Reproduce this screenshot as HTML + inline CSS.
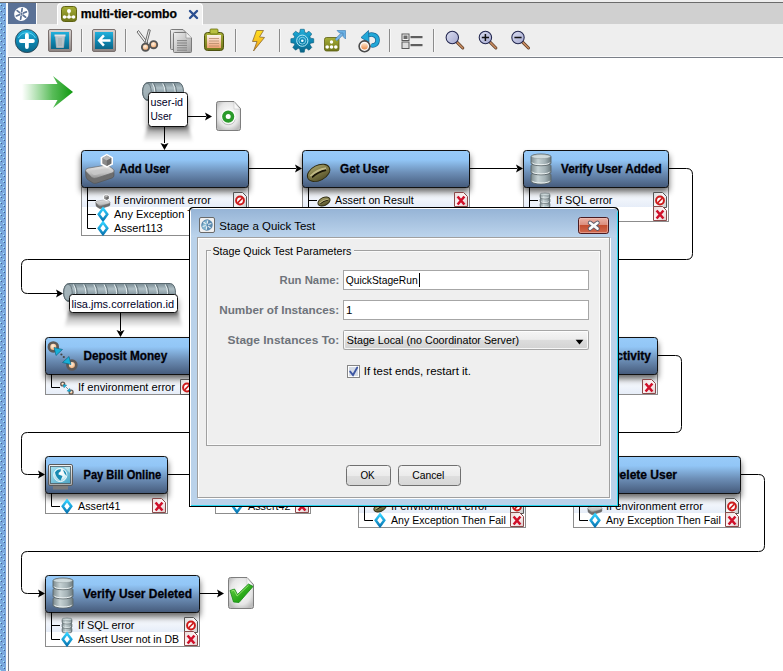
<!DOCTYPE html>
<html><head><meta charset="utf-8">
<style>
html,body{margin:0;padding:0;width:783px;height:671px;overflow:hidden;background:#fff;font-family:"Liberation Sans",sans-serif}
svg{display:block;position:absolute;left:0;top:0}
text{font-family:"Liberation Sans",sans-serif}
</style></head><body>
<svg width="783" height="671" viewBox="0 0 783 671">
<defs>
  <pattern id="dots" x="0" y="0" width="6" height="6" patternUnits="userSpaceOnUse">
    <rect width="6" height="6" fill="#7aa8de"/>
    <rect x="0" y="4" width="1" height="1" fill="#a8f4ff"/>
    <rect x="1" y="5" width="1" height="1" fill="#3e5f86"/>
    <rect x="3" y="1" width="1" height="1" fill="#a8f4ff"/>
    <rect x="4" y="2" width="1" height="1" fill="#3e5f86"/>
  </pattern>
  <linearGradient id="hdr" x1="0" y1="0" x2="0" y2="1">
    <stop offset="0" stop-color="#98cbf9"/>
    <stop offset="0.25" stop-color="#92c6f6"/>
    <stop offset="0.6" stop-color="#6c8eb6"/>
    <stop offset="1" stop-color="#455a7a"/>
  </linearGradient>
  <linearGradient id="row1" x1="0" y1="0" x2="0" y2="1">
    <stop offset="0" stop-color="#ffffff"/>
    <stop offset="1" stop-color="#e6edf8"/>
  </linearGradient>
  <linearGradient id="garrow" x1="0" y1="0" x2="1" y2="0">
    <stop offset="0" stop-color="#30b030" stop-opacity="0"/>
    <stop offset="0.6" stop-color="#22a622" stop-opacity="0.75"/>
    <stop offset="1" stop-color="#0e980e" stop-opacity="1"/>
  </linearGradient>
  <linearGradient id="qcyl" x1="0" y1="0" x2="0" y2="1">
    <stop offset="0" stop-color="#7a8c94"/>
    <stop offset="0.3" stop-color="#aebec4"/>
    <stop offset="0.6" stop-color="#8a9ca4"/>
    <stop offset="1" stop-color="#6a7a82"/>
  </linearGradient>
  <linearGradient id="labsh" x1="0" y1="0" x2="0" y2="1">
    <stop offset="0" stop-color="#000" stop-opacity="0.6"/>
    <stop offset="0.3" stop-color="#000" stop-opacity="0.3"/>
    <stop offset="1" stop-color="#000" stop-opacity="0"/>
  </linearGradient>
  <filter id="nshadow" x="-30%" y="-50%" width="160%" height="200%">
    <feGaussianBlur stdDeviation="3"/>
  </filter>
  <filter id="lshadow" x="-50%" y="-80%" width="200%" height="260%">
    <feGaussianBlur stdDeviation="3.6"/>
  </filter>
  <filter id="blur1" x="-30%" y="-50%" width="160%" height="200%">
    <feGaussianBlur stdDeviation="1.5"/>
  </filter>
  <filter id="blur2" x="-30%" y="-50%" width="160%" height="200%">
    <feGaussianBlur stdDeviation="3"/>
  </filter>

<linearGradient id="tealv" x1="0" y1="0" x2="0" y2="1">
  <stop offset="0" stop-color="#22b0dc"/><stop offset="0.5" stop-color="#0e88b4"/><stop offset="1" stop-color="#0a6688"/>
</linearGradient>
<linearGradient id="bevel" x1="0" y1="0" x2="0" y2="1">
  <stop offset="0" stop-color="#d8d2d0"/><stop offset="1" stop-color="#8a8280"/>
</linearGradient>
<linearGradient id="peach" x1="0" y1="0" x2="0" y2="1">
  <stop offset="0" stop-color="#ffe6cc"/><stop offset="1" stop-color="#e88a48"/>
</linearGradient>
<radialGradient id="peachr" cx="0.45" cy="0.4" r="0.6">
  <stop offset="0" stop-color="#fff4e8"/><stop offset="0.6" stop-color="#f6c090"/><stop offset="1" stop-color="#e89050"/>
</radialGradient>
<radialGradient id="globe" cx="0.55" cy="0.35" r="0.7">
  <stop offset="0" stop-color="#ffffff"/><stop offset="0.6" stop-color="#d8f0f6"/><stop offset="1" stop-color="#7ac4dc"/>
</radialGradient>
<linearGradient id="copyg" x1="0" y1="0" x2="1" y2="1">
  <stop offset="0" stop-color="#f0f0f0"/><stop offset="1" stop-color="#a0a0a0"/>
</linearGradient>
<linearGradient id="paper" x1="0" y1="0" x2="0" y2="1">
  <stop offset="0" stop-color="#fbf4ee"/><stop offset="1" stop-color="#f0a070"/>
</linearGradient>
<linearGradient id="sdoc" x1="0" y1="0" x2="1" y2="1">
  <stop offset="0" stop-color="#d8d8d8"/><stop offset="0.5" stop-color="#f8f8f8"/><stop offset="1" stop-color="#c8c8c8"/>
</linearGradient>
<linearGradient id="sdocr" x1="0" y1="0" x2="1" y2="1">
  <stop offset="0" stop-color="#e8d8d8"/><stop offset="0.5" stop-color="#fcf6f6"/><stop offset="1" stop-color="#dcc8c8"/>
</linearGradient>
<linearGradient id="grayv" x1="0" y1="0" x2="0" y2="1">
  <stop offset="0" stop-color="#f4f4f4"/><stop offset="1" stop-color="#a8a8a8"/>
</linearGradient>
<linearGradient id="olive" x1="0" y1="0" x2="0" y2="1">
  <stop offset="0" stop-color="#a8b038"/><stop offset="1" stop-color="#6e7418"/>
</linearGradient>
<linearGradient id="bolt" x1="0" y1="0" x2="0" y2="1">
  <stop offset="0" stop-color="#ffe020"/><stop offset="0.55" stop-color="#f8c020"/><stop offset="1" stop-color="#e88a10"/>
</linearGradient>
<linearGradient id="lens" x1="0" y1="0" x2="1" y2="1">
  <stop offset="0" stop-color="#dcdff0"/><stop offset="1" stop-color="#a4a8d0"/>
</linearGradient>
<linearGradient id="tray" x1="0" y1="0" x2="0" y2="1">
  <stop offset="0" stop-color="#e8e8e8"/><stop offset="0.6" stop-color="#c0c0c0"/><stop offset="1" stop-color="#909090"/>
</linearGradient>
<linearGradient id="beanf" x1="0" y1="0" x2="0" y2="1">
  <stop offset="0" stop-color="#a09a60"/><stop offset="1" stop-color="#56522a"/>
</linearGradient>
<linearGradient id="dbf" x1="0" y1="0" x2="1" y2="0">
  <stop offset="0" stop-color="#7c8a8e"/><stop offset="0.35" stop-color="#c6d2d4"/><stop offset="0.7" stop-color="#a4b2b6"/><stop offset="1" stop-color="#6c7a7e"/>
</linearGradient>
<linearGradient id="cyanv" x1="0" y1="0" x2="0" y2="1">
  <stop offset="0" stop-color="#30d0ff"/><stop offset="1" stop-color="#0a78b4"/>
</linearGradient>
<radialGradient id="docf" cx="0.5" cy="0.45" r="0.6">
  <stop offset="0" stop-color="#ffffff"/><stop offset="0.7" stop-color="#e6e6e6"/><stop offset="1" stop-color="#bdbdbd"/>
</radialGradient>
<linearGradient id="checkg" x1="0" y1="0" x2="1" y2="1">
  <stop offset="0" stop-color="#6ad04a"/><stop offset="0.6" stop-color="#28a818"/><stop offset="1" stop-color="#0a8a0a"/>
</linearGradient>
<linearGradient id="screen" x1="0" y1="0" x2="1" y2="1">
  <stop offset="0" stop-color="#a8e4f4"/><stop offset="1" stop-color="#4aa4c4"/>
</linearGradient>
</defs>

<rect x="0" y="0" width="783" height="671" fill="#ffffff"/>
<rect x="0" y="0" width="783" height="2" fill="#eeeeee"/>
<rect x="0" y="2" width="783" height="1" fill="#6b6b6b"/>
<rect x="0" y="3" width="783" height="21" fill="#d0d0d0"/>
<rect x="0" y="24" width="783" height="33" fill="#eeeeee"/>
<rect x="8" y="3" width="28" height="21" fill="#5a7196"/>
<rect x="36" y="3" width="1" height="21" fill="#ffffff"/>
<path d="M57,25 V7 Q57,3 61,3 H199 Q203,3 203,7 V25 Z" fill="#ffffff"/>
<path d="M58,25 V7.5 Q58,4 61.5,4 H198.5 Q202,4 202,7.5 V25 Z" fill="#f0f0f0"/>
<rect x="8" y="56" width="775" height="1" fill="#fafafa"/>
<rect x="8" y="57" width="775" height="614" fill="#7a7f88"/>
<rect x="9" y="58" width="774" height="613" fill="#ffffff"/>
<ellipse cx="21.4" cy="13.9" rx="7.4" ry="6.9" transform="rotate(-25 21.4 13.9)" fill="#fff"/><path d="M21.71,11.72 L22.15,8.55" stroke="#5d7396" stroke-width="1.7" stroke-linecap="round"/><path d="M23.44,13.08 L26.41,11.88" stroke="#5d7396" stroke-width="1.7" stroke-linecap="round"/><path d="M23.13,15.25 L25.66,17.22" stroke="#5d7396" stroke-width="1.7" stroke-linecap="round"/><path d="M21.09,16.08 L20.65,19.25" stroke="#5d7396" stroke-width="1.7" stroke-linecap="round"/><path d="M19.36,14.72 L16.39,15.92" stroke="#5d7396" stroke-width="1.7" stroke-linecap="round"/><path d="M19.67,12.55 L17.14,10.58" stroke="#5d7396" stroke-width="1.7" stroke-linecap="round"/><circle cx="21.4" cy="13.9" r="1.1" fill="#5d7396"/><rect x="61.5" y="6.5" width="15" height="15" rx="3" fill="url(#olive)" stroke="#5e6212"/><path d="M69,11 V17 M64.5,17 H73.5" stroke="#fff" stroke-width="1"/><circle cx="69" cy="11" r="2" fill="#fff"/><circle cx="64.5" cy="17" r="1.8" fill="#fff"/><circle cx="69" cy="17" r="1.8" fill="#fff"/><circle cx="73.5" cy="17" r="1.8" fill="#fff"/>
<text x="80.7" y="18.2" font-size="12.2" font-weight="bold" fill="#000" stroke="#000" stroke-width="0.25" textLength="96.3" lengthAdjust="spacingAndGlyphs">multi-tier-combo</text>
<path d="M190,11 L197,18 M197,11 L190,18" stroke="#2b4f91" stroke-width="2.4" stroke-linecap="round"/>

<circle cx="26.9" cy="41" r="11.6" fill="url(#tealv)" stroke="#2e4452" stroke-width="0.9"/><path d="M18.4,38 A9.5,9.5 0 0 1 35.4,38" fill="none" stroke="#6ae0fa" stroke-width="1" opacity="0.8"/><path d="M20.9,41 H32.9 M26.9,35 V47" stroke="#fff" stroke-width="3.8" stroke-linecap="round"/>
<rect x="48.5" y="29.5" width="23" height="22" rx="1.5" fill="url(#bevel)" stroke="#7a706e" stroke-width="1"/><rect x="51" y="32" width="18" height="17" fill="url(#tealv)"/><path d="M55.5,36.5 H64.5 L63.5,47.5 H56.5 Z" fill="#d4d0d0" fill-opacity="0.85" stroke="#c8b8b8" stroke-width="0.7"/><rect x="54.5" y="34.5" width="11" height="2" fill="#e8e0e0"/><path d="M59,38 V46 M61,38 V46" stroke="#a8a8a8" stroke-width="0.9"/>
<rect x="81" y="29" width="1" height="23" fill="#8c8c8c"/><rect x="82" y="29" width="1" height="23" fill="#f8f8f8"/>
<rect x="92.5" y="29.5" width="23" height="22" rx="1.5" fill="url(#bevel)" stroke="#7a706e" stroke-width="1"/><rect x="95" y="32" width="18" height="17" fill="url(#tealv)"/><path d="M97.5,40.5 L103,34.5 L104.8,36.3 L102,39.2 H110.5 V41.8 H102 L104.8,44.7 L103,46.5 Z" fill="#fff"/>
<rect x="125" y="29" width="1" height="23" fill="#8c8c8c"/><rect x="126" y="29" width="1" height="23" fill="#f8f8f8"/>
<path d="M137,32 L138.5,30.5 L148,43 L146.5,44.5 Z" fill="#f4f4f4" stroke="#5a5a5a" stroke-width="0.9" stroke-linejoin="round"/><path d="M148.5,29.5 L150.3,30.2 L146.5,44.5 L144.8,43.8 Z" fill="#f4f4f4" stroke="#5a5a5a" stroke-width="0.9" stroke-linejoin="round"/><circle cx="146.2" cy="43.6" r="0.9" fill="#5a5a5a"/><circle cx="145.5" cy="47.2" r="3.6" fill="url(#peachr)" stroke="#555" stroke-width="1.9"/><circle cx="153.6" cy="44.7" r="3.6" fill="url(#peachr)" stroke="#555" stroke-width="1.9"/>
<path d="M170.5,30.5 Q170.5,29.5 171.5,29.5 H183 L188.5,35 V48.5 Q188.5,49.5 187.5,49.5 H171.5 Q170.5,49.5 170.5,48.5 Z" fill="url(#copyg)" stroke="#7a7a7a"/><path d="M173.5,33.5 Q173.5,32.5 174.5,32.5 H186 L191.5,38 V51.5 Q191.5,52.5 190.5,52.5 H174.5 Q173.5,52.5 173.5,51.5 Z" fill="url(#copyg)" stroke="#7a7a7a"/><path d="M186,32.5 V38 H191.5" fill="#f0f0f0" stroke="#9a9a9a" stroke-width="0.7"/><rect x="177" y="40.0" width="10" height="1.2" fill="#8a8a8a"/><rect x="177" y="42.4" width="10" height="1.2" fill="#8a8a8a"/><rect x="177" y="44.8" width="10" height="1.2" fill="#8a8a8a"/><rect x="177" y="47.2" width="10" height="1.2" fill="#8a8a8a"/><rect x="177" y="49.6" width="10" height="1.2" fill="#8a8a8a"/>
<rect x="204.5" y="32.5" width="19" height="18" rx="3" fill="url(#olive)" stroke="#4e5210"/><rect x="210" y="29" width="8" height="5" rx="1" fill="#b8c040" stroke="#6a7010" stroke-width="0.8"/><rect x="207" y="35" width="14" height="13" fill="url(#paper)"/><path d="M209,38.5 H219 M209,41 H219 M209,43.5 H219 M209,46 H219" stroke="#b88a6a" stroke-width="0.8"/>
<rect x="235" y="29" width="1" height="23" fill="#8c8c8c"/><rect x="236" y="29" width="1" height="23" fill="#f8f8f8"/>
<path d="M256.5,30.5 H263.5 L259.5,37 L264.5,37.5 L253.5,51 L257,41.5 H252.5 Z" fill="url(#bolt)" stroke="#8a6a30" stroke-width="0.8" stroke-linejoin="round"/>
<rect x="279" y="29" width="1" height="23" fill="#8c8c8c"/><rect x="280" y="29" width="1" height="23" fill="#f8f8f8"/>
<polygon points="299.76,32.48 300.34,29.27 304.26,29.27 304.84,32.48 306.31,33.09 309.00,31.23 311.77,34.00 309.91,36.69 310.52,38.16 313.73,38.74 313.73,42.66 310.52,43.24 309.91,44.71 311.77,47.40 309.00,50.17 306.31,48.31 304.84,48.92 304.26,52.13 300.34,52.13 299.76,48.92 298.29,48.31 295.60,50.17 292.83,47.40 294.69,44.71 294.08,43.24 290.87,42.66 290.87,38.74 294.08,38.16 294.69,36.69 292.83,34.00 295.60,31.23 298.29,33.09" fill="url(#tealv)" stroke="#0a5a7a" stroke-width="0.6" stroke-linejoin="round"/><circle cx="302.3" cy="40.7" r="5.6" fill="none" stroke="#b8ecfa" stroke-width="1"/><circle cx="302.3" cy="40.7" r="3.4" fill="none" stroke="#9ee0f4" stroke-width="0.8"/><circle cx="302.3" cy="40.7" r="1.3" fill="#f4fcff"/>
<rect x="324.5" y="37.5" width="14.5" height="13.5" rx="2" fill="url(#olive)" stroke="#5a5e10" stroke-width="0.8"/><circle cx="331.5" cy="42" r="1.7" fill="#fff"/><circle cx="327.2" cy="47" r="1.8" fill="#fff"/><circle cx="331.5" cy="47" r="1.8" fill="#fff"/><circle cx="335.8" cy="47" r="1.8" fill="#fff"/><path d="M336,40 L343.5,32.5" stroke="#3a7ab0" stroke-width="3"/><path d="M336,40 L343.5,32.5" stroke="#7ab8e8" stroke-width="1.8"/><path d="M337,30.5 H345.5 V39 L343,36.5 V33 H339.5 Z" fill="#6ab0e4" stroke="#3a78b0" stroke-width="0.6"/>
<path d="M365,37 C370,33 377,34 377.5,39.5 C378,44 374,46.5 371,45" fill="none" stroke="#1a6a9a" stroke-width="4.6"/><path d="M365,37 C370,33 377,34 377.5,39.5 C378,44 374,46.5 371,45" fill="none" stroke="#22a8d8" stroke-width="3"/><path d="M361,37.5 L368.5,30.5 L369,42.5 Z" fill="#22a8d8" stroke="#1a6a9a" stroke-width="0.8" stroke-linejoin="round"/><circle cx="364.5" cy="46.3" r="5.4" fill="#fafafa" stroke="#4a4a4a" stroke-width="1.6"/><circle cx="364.5" cy="46.3" r="3.3" fill="url(#peach)"/>
<rect x="389" y="29" width="1" height="23" fill="#8c8c8c"/><rect x="390" y="29" width="1" height="23" fill="#f8f8f8"/>
<rect x="402.0" y="34.0" width="7" height="6.5" fill="#f4f4f4" stroke="#5a5a5a"/><rect x="403.5" y="35.5" width="4" height="3.5" fill="#6a6a6a"/><rect x="402.0" y="42.0" width="7" height="6.5" fill="#dcdcdc" stroke="#5a5a5a"/><rect x="410.5" y="36.0" width="12" height="2.2" fill="#5e5e5e"/><rect x="410.5" y="44.0" width="12" height="2.2" fill="#5e5e5e"/>
<rect x="433" y="29" width="1" height="23" fill="#8c8c8c"/><rect x="434" y="29" width="1" height="23" fill="#f8f8f8"/>
<path d="M456.90000000000003,42.1 L462.8,48.0" stroke="#5a3a22" stroke-width="3" stroke-linecap="round"/><path d="M456.90000000000003,42.1 L462.8,48.0" stroke="#c88c62" stroke-width="1.6" stroke-linecap="round"/><circle cx="452.3" cy="37.5" r="6.2" fill="url(#lens)" stroke="#22264e" stroke-width="1.05"/>
<path d="M490.0,42.1 L495.9,48.0" stroke="#5a3a22" stroke-width="3" stroke-linecap="round"/><path d="M490.0,42.1 L495.9,48.0" stroke="#c88c62" stroke-width="1.6" stroke-linecap="round"/><circle cx="485.4" cy="37.5" r="6.2" fill="url(#lens)" stroke="#22264e" stroke-width="1.05"/><path d="M481.79999999999995,37.5 H489.0 M485.4,33.9 V41.1" stroke="#111" stroke-width="1.5"/>
<path d="M522.6,42.1 L528.5,48.0" stroke="#5a3a22" stroke-width="3" stroke-linecap="round"/><path d="M522.6,42.1 L528.5,48.0" stroke="#c88c62" stroke-width="1.6" stroke-linecap="round"/><circle cx="518" cy="37.5" r="6.2" fill="url(#lens)" stroke="#22264e" stroke-width="1.05"/><path d="M514.4,37.5 H521.6" stroke="#111" stroke-width="1.5"/>
<path d="M164.5,126 V143" fill="none" stroke="#000" stroke-width="1"/>
<path d="M164.5,150 L160.5,143 L164.5,144.5 L168.5,143 Z" fill="#000"/>
<path d="M188,116.5 H206" fill="none" stroke="#000" stroke-width="1"/>
<path d="M212,116.5 L205,112.5 L206.5,116.5 L205,120.5 Z" fill="#000"/>
<path d="M249,168.5 H296" fill="none" stroke="#000" stroke-width="1"/>
<path d="M302,168.5 L295,164.5 L296.5,168.5 L295,172.5 Z" fill="#000"/>
<path d="M469,168.5 H517" fill="none" stroke="#000" stroke-width="1"/>
<path d="M523,168.5 L516,164.5 L517.5,168.5 L516,172.5 Z" fill="#000"/>
<path d="M668,168.5 H686.5 Q692.5,168.5 692.5,174.5 V253.5 Q692.5,259.5 686.5,259.5 H27.5 Q21.5,259.5 21.5,265.5 V287.5 Q21.5,293.5 27.5,293.5 H60" fill="none" stroke="#000" stroke-width="1"/>
<path d="M63,293.5 L56,289.5 L57.5,293.5 L56,297.5 Z" fill="#000"/>
<path d="M120.5,313 V331" fill="none" stroke="#000" stroke-width="1"/>
<path d="M120.5,337 L116.5,330 L120.5,331.5 L124.5,330 Z" fill="#000"/>
<path d="M657,355.5 H675.5 Q681.5,355.5 681.5,361.5 V426.5 Q681.5,432.5 675.5,432.5 H27.5 Q21.5,432.5 21.5,438.5 V468.5 Q21.5,474.5 27.5,474.5 H42" fill="none" stroke="#000" stroke-width="1"/>
<path d="M45,474.5 L38,470.5 L39.5,474.5 L38,478.5 Z" fill="#000"/>
<path d="M168,474.5 H190" fill="none" stroke="#000" stroke-width="1"/>
<path d="M740,474.5 H758.5 Q764.5,474.5 764.5,480.5 V545.5 Q764.5,551.5 758.5,551.5 H27.5 Q21.5,551.5 21.5,557.5 V587.5 Q21.5,593.5 27.5,593.5 H42" fill="none" stroke="#000" stroke-width="1"/>
<path d="M45,593.5 L38,589.5 L39.5,593.5 L38,597.5 Z" fill="#000"/>
<path d="M199,593.5 H220" fill="none" stroke="#000" stroke-width="1"/>
<path d="M224,593.5 L217,589.5 L218.5,593.5 L217,597.5 Z" fill="#000"/>
<rect x="81.5" y="187" width="167" height="48.5" fill="#fff" stroke="#8c8c8c" stroke-width="1"/>
<rect x="82" y="188" width="166" height="19" fill="url(#row1)"/>
<rect x="81" y="155" width="168" height="37" rx="3" fill="#000" opacity="0.6" filter="url(#nshadow)"/>
<rect x="81.5" y="150.5" width="167" height="37" rx="3" fill="url(#hdr)" stroke="#111" stroke-width="1"/>
<text x="119.5" y="173" font-size="12" font-weight="bold" fill="#000008" stroke="#000008" stroke-width="0.3" text-anchor="start" textLength="50.5" lengthAdjust="spacingAndGlyphs">Add User</text>
<g transform="translate(84,152) scale(1.0)"><path d="M1.5,19 L2,25 Q2.5,27 5,28.5 L9,31 Q10.5,31.8 13,31 L28,26 Q30,25.3 30,23 L29.8,18.5 Z" fill="#6e6e6e" stroke="#555" stroke-width="0.7"/><path d="M1.5,19 Q1.3,16.8 4,16.2 L20,13.5 Q23,13 26,14.8 L29,17 Q30.5,18.3 29.8,19.5 Q29.5,20.5 28,21 L13,26 Q10,27 8,25.8 Z" fill="url(#tray)" stroke="#6a6a6a" stroke-width="0.7"/><path d="M6,19 L20.5,16.5 Q23,16.2 25,17.5 L26,18.5 L12.5,22.8 Q10.5,23.3 9,22.4 Z" fill="#c8c8c8" opacity="0.8"/><path d="M22.8,1.8 L29,5.2 V12.4 L22.8,15.8 L16.6,12.4 V5.2 Z" fill="#fff"/><path d="M22.8,3.6 L27.3,6.1 V11.4 L22.8,13.9 L18.3,11.4 V6.1 Z" fill="#8a8a8a"/><path d="M22.8,3.6 L27.3,6.1 L22.8,8.6 L18.3,6.1 Z" fill="#b8b8b8"/><path d="M22.8,8.6 V13.9 L27.3,11.4 V6.1 Z" fill="#6c6c6c"/></g>
<path d="M87.5,187 V228.5" stroke="#000" fill="none"/>
<path d="M87.5,200.5 H96" stroke="#000" fill="none"/>
<text x="114" y="204" font-size="11" fill="#000" textLength="97" lengthAdjust="spacingAndGlyphs">If environment error</text>
<g transform="translate(95,193) scale(0.5)"><path d="M1.5,19 L2,25 Q2.5,27 5,28.5 L9,31 Q10.5,31.8 13,31 L28,26 Q30,25.3 30,23 L29.8,18.5 Z" fill="#6e6e6e" stroke="#555" stroke-width="0.7"/><path d="M1.5,19 Q1.3,16.8 4,16.2 L20,13.5 Q23,13 26,14.8 L29,17 Q30.5,18.3 29.8,19.5 Q29.5,20.5 28,21 L13,26 Q10,27 8,25.8 Z" fill="url(#tray)" stroke="#6a6a6a" stroke-width="0.7"/><path d="M6,19 L20.5,16.5 Q23,16.2 25,17.5 L26,18.5 L12.5,22.8 Q10.5,23.3 9,22.4 Z" fill="#c8c8c8" opacity="0.8"/><path d="M22.8,1.8 L29,5.2 V12.4 L22.8,15.8 L16.6,12.4 V5.2 Z" fill="#fff"/><path d="M22.8,3.6 L27.3,6.1 V11.4 L22.8,13.9 L18.3,11.4 V6.1 Z" fill="#8a8a8a"/><path d="M22.8,3.6 L27.3,6.1 L22.8,8.6 L18.3,6.1 Z" fill="#b8b8b8"/><path d="M22.8,8.6 V13.9 L27.3,11.4 V6.1 Z" fill="#6c6c6c"/></g>
<path d="M233.5,192.5 H242.5 L246.5,196.5 V207.5 H233.5 Z" fill="url(#sdoc)" stroke="#555" stroke-width="1"/><circle cx="240" cy="200.5" r="3.9" fill="#fff" stroke="#cc1a1a" stroke-width="2"/><path d="M237.6,203 L242.4,198" stroke="#cc1a1a" stroke-width="1.8"/>
<path d="M87.5,214.5 H96" stroke="#000" fill="none"/>
<text x="114" y="218" font-size="11" fill="#000">Any Exception Then Fail</text>
<path d="M103,208.5 L107.3,214.3 L103,220.10000000000002 L98.7,214.3 Z" fill="#fff" stroke="url(#cyanv)" stroke-width="2.5" stroke-linejoin="miter"/>
<path d="M87.5,228.5 H96" stroke="#000" fill="none"/>
<text x="114" y="232" font-size="11" fill="#000">Assert113</text>
<path d="M103,222.5 L107.3,228.3 L103,234.10000000000002 L98.7,228.3 Z" fill="#fff" stroke="url(#cyanv)" stroke-width="2.5" stroke-linejoin="miter"/>
<rect x="302.5" y="187" width="167" height="48.5" fill="#fff" stroke="#8c8c8c" stroke-width="1"/>
<rect x="303" y="188" width="166" height="19" fill="url(#row1)"/>
<rect x="302" y="155" width="168" height="37" rx="3" fill="#000" opacity="0.6" filter="url(#nshadow)"/>
<rect x="302.5" y="150.5" width="167" height="37" rx="3" fill="url(#hdr)" stroke="#111" stroke-width="1"/>
<text x="340" y="173" font-size="12" font-weight="bold" fill="#000008" stroke="#000008" stroke-width="0.3" text-anchor="start" textLength="49" lengthAdjust="spacingAndGlyphs">Get User</text>
<g transform="rotate(-27 318.6 172.9)"><ellipse cx="318.6" cy="172.9" rx="12" ry="7.6" fill="url(#beanf)" stroke="#2e2a10" stroke-width="0.9"/><path d="M309.96000000000004,172.52 Q318.6,169.708 327.24,172.52" fill="none" stroke="#d4cc98" stroke-width="2.74" opacity="0.75"/><path d="M310.68,173.812 Q318.6,171.532 326.52000000000004,173.812" fill="none" stroke="#1a1606" stroke-width="1.82"/></g>
<path d="M308.5,187 V214.5" stroke="#000" fill="none"/>
<path d="M308.5,200.5 H317" stroke="#000" fill="none"/>
<text x="335" y="204" font-size="11" fill="#000" textLength="78.7" lengthAdjust="spacingAndGlyphs">Assert on Result</text>
<g transform="rotate(-25 324 201.5)"><ellipse cx="324" cy="201.5" rx="6.5" ry="4" fill="url(#beanf)" stroke="#2e2a10" stroke-width="0.9"/><path d="M319.32,201.3 Q324,199.82 328.68,201.3" fill="none" stroke="#d4cc98" stroke-width="1.44" opacity="0.75"/><path d="M319.71,201.98 Q324,200.78 328.29,201.98" fill="none" stroke="#1a1606" stroke-width="0.96"/></g>
<path d="M454.5,192.5 H463.5 L467.5,196.5 V206.5 H454.5 Z" fill="url(#sdocr)" stroke="#8a4a4a" stroke-width="1"/><path d="M457.6,196.5 L464.4,204.5 M464.4,196.5 L457.6,204.5" stroke="#d0102a" stroke-width="2.6"/>
<path d="M308.5,214.5 H317" stroke="#000" fill="none"/>
<text x="335" y="218" font-size="11" fill="#000">Any Exception</text>
<path d="M324,208.5 L328.3,214.3 L324,220.10000000000002 L319.7,214.3 Z" fill="#fff" stroke="url(#cyanv)" stroke-width="2.5" stroke-linejoin="miter"/>
<rect x="523.5" y="187" width="145" height="34.5" fill="#fff" stroke="#8c8c8c" stroke-width="1"/>
<rect x="524" y="188" width="144" height="19" fill="url(#row1)"/>
<rect x="523" y="155" width="146" height="37" rx="3" fill="#000" opacity="0.6" filter="url(#nshadow)"/>
<rect x="523.5" y="150.5" width="145" height="37" rx="3" fill="url(#hdr)" stroke="#111" stroke-width="1"/>
<text x="561" y="173" font-size="12" font-weight="bold" fill="#000008" stroke="#000008" stroke-width="0.3" text-anchor="start" textLength="100.7" lengthAdjust="spacingAndGlyphs">Verify User Added</text>
<path d="M531,174.86666666666665 A10.0,2.6 0 0 1 551,174.86666666666665 V181.39999999999998 A10.0,2.6 0 0 1 531,181.39999999999998 Z" fill="url(#dbf)" stroke="#5c666a" stroke-width="0.9"/><path d="M532.2,180.79999999999998 A8.8,2.2 0 0 0 549.8,180.79999999999998" fill="none" stroke="#f4f8f8" stroke-width="0.9"/><path d="M531,165.73333333333332 A10.0,2.6 0 0 1 551,165.73333333333332 V172.26666666666665 A10.0,2.6 0 0 1 531,172.26666666666665 Z" fill="url(#dbf)" stroke="#5c666a" stroke-width="0.9"/><path d="M532.2,171.66666666666666 A8.8,2.2 0 0 0 549.8,171.66666666666666" fill="none" stroke="#f4f8f8" stroke-width="0.9"/><path d="M531,156.6 A10.0,2.6 0 0 1 551,156.6 V163.13333333333333 A10.0,2.6 0 0 1 531,163.13333333333333 Z" fill="url(#dbf)" stroke="#5c666a" stroke-width="0.9"/><path d="M532.2,162.53333333333333 A8.8,2.2 0 0 0 549.8,162.53333333333333" fill="none" stroke="#f4f8f8" stroke-width="0.9"/><ellipse cx="541.0" cy="156.6" rx="9.4" ry="2.1" fill="#cfdadc" stroke="#8a9698" stroke-width="0.5"/>
<path d="M529.5,187 V214.5" stroke="#000" fill="none"/>
<path d="M529.5,200.5 H538" stroke="#000" fill="none"/>
<text x="556" y="204" font-size="11" fill="#000" textLength="56.5" lengthAdjust="spacingAndGlyphs">If SQL error</text>
<path d="M540,203.5 A5.0,1.5 0 0 1 550,203.5 V206.5 A5.0,1.5 0 0 1 540,206.5 Z" fill="url(#dbf)" stroke="#5c666a" stroke-width="0.6"/><path d="M541.2,205.9 A3.8,1.1 0 0 0 548.8,205.9" fill="none" stroke="#f4f8f8" stroke-width="0.6"/><path d="M540,199.0 A5.0,1.5 0 0 1 550,199.0 V202.0 A5.0,1.5 0 0 1 540,202.0 Z" fill="url(#dbf)" stroke="#5c666a" stroke-width="0.6"/><path d="M541.2,201.4 A3.8,1.1 0 0 0 548.8,201.4" fill="none" stroke="#f4f8f8" stroke-width="0.6"/><path d="M540,194.5 A5.0,1.5 0 0 1 550,194.5 V197.5 A5.0,1.5 0 0 1 540,197.5 Z" fill="url(#dbf)" stroke="#5c666a" stroke-width="0.6"/><path d="M541.2,196.9 A3.8,1.1 0 0 0 548.8,196.9" fill="none" stroke="#f4f8f8" stroke-width="0.6"/><ellipse cx="545.0" cy="194.5" rx="4.4" ry="1.0" fill="#cfdadc" stroke="#8a9698" stroke-width="0.5"/>
<path d="M653.5,192.5 H662.5 L666.5,196.5 V207.5 H653.5 Z" fill="url(#sdoc)" stroke="#555" stroke-width="1"/><circle cx="660" cy="200.5" r="3.9" fill="#fff" stroke="#cc1a1a" stroke-width="2"/><path d="M657.6,203 L662.4,198" stroke="#cc1a1a" stroke-width="1.8"/>
<path d="M529.5,214.5 H538" stroke="#000" fill="none"/>
<text x="556" y="218" font-size="11" fill="#000">Assert</text>
<path d="M545,208.5 L549.3,214.3 L545,220.10000000000002 L540.7,214.3 Z" fill="#fff" stroke="url(#cyanv)" stroke-width="2.5" stroke-linejoin="miter"/>
<path d="M653.5,206.5 H662.5 L666.5,210.5 V220.5 H653.5 Z" fill="url(#sdocr)" stroke="#8a4a4a" stroke-width="1"/><path d="M656.6,210.5 L663.4,218.5 M663.4,210.5 L656.6,218.5" stroke="#d0102a" stroke-width="2.6"/>
<rect x="45.5" y="374" width="150" height="20.5" fill="#fff" stroke="#8c8c8c" stroke-width="1"/>
<rect x="46" y="375" width="149" height="19" fill="url(#row1)"/>
<rect x="45" y="342" width="151" height="37" rx="3" fill="#000" opacity="0.6" filter="url(#nshadow)"/>
<rect x="45.5" y="337.5" width="150" height="37" rx="3" fill="url(#hdr)" stroke="#111" stroke-width="1"/>
<text x="83.5" y="360" font-size="12" font-weight="bold" fill="#000008" stroke="#000008" stroke-width="0.3" text-anchor="start" textLength="83.7" lengthAdjust="spacingAndGlyphs">Deposit Money</text>
<g transform="translate(45,338) scale(1.0)"><circle cx="8.3" cy="8.9" r="4.4" fill="url(#peachr)" stroke="#5e5a58" stroke-width="2.7"/><circle cx="26.9" cy="27.1" r="4.4" fill="url(#peachr)" stroke="#5e5a58" stroke-width="2.7"/><path d="M9,9.5 L17.5,11.5 L11,17.5 Z" fill="#18b0d8" stroke="#0a5a7a" stroke-width="0.6"/><path d="M26,26.5 L17.5,24.5 L24,18.5 Z" fill="#18b0d8" stroke="#0a5a7a" stroke-width="0.6"/><circle cx="16.4" cy="16.5" r="1.1" fill="#444"/><circle cx="18.8" cy="19" r="1.1" fill="#444"/></g>
<path d="M51.5,374 V387.5" stroke="#000" fill="none"/>
<path d="M51.5,387.5 H60" stroke="#000" fill="none"/>
<text x="78" y="391" font-size="11" fill="#000" textLength="97" lengthAdjust="spacingAndGlyphs">If environment error</text>
<g transform="translate(59,380) scale(0.45)"><circle cx="8.3" cy="8.9" r="4.4" fill="url(#peachr)" stroke="#5e5a58" stroke-width="2.7"/><circle cx="26.9" cy="27.1" r="4.4" fill="url(#peachr)" stroke="#5e5a58" stroke-width="2.7"/><path d="M9,9.5 L17.5,11.5 L11,17.5 Z" fill="#18b0d8" stroke="#0a5a7a" stroke-width="0.6"/><path d="M26,26.5 L17.5,24.5 L24,18.5 Z" fill="#18b0d8" stroke="#0a5a7a" stroke-width="0.6"/><circle cx="16.4" cy="16.5" r="1.1" fill="#444"/><circle cx="18.8" cy="19" r="1.1" fill="#444"/></g>
<path d="M180.5,379.5 H189.5 L193.5,383.5 V394.5 H180.5 Z" fill="url(#sdoc)" stroke="#555" stroke-width="1"/><circle cx="187" cy="387.5" r="3.9" fill="#fff" stroke="#cc1a1a" stroke-width="2"/><path d="M184.6,390 L189.4,385" stroke="#cc1a1a" stroke-width="1.8"/>
<rect x="480.5" y="374" width="177" height="20.5" fill="#fff" stroke="#8c8c8c" stroke-width="1"/>
<rect x="481" y="375" width="176" height="19" fill="url(#row1)"/>
<rect x="480" y="342" width="178" height="37" rx="3" fill="#000" opacity="0.6" filter="url(#nshadow)"/>
<rect x="480.5" y="337.5" width="177" height="37" rx="3" fill="url(#hdr)" stroke="#111" stroke-width="1"/>
<text x="651" y="360" font-size="12" font-weight="bold" fill="#000008" stroke="#000008" stroke-width="0.3" text-anchor="end">Activity</text>
<path d="M486.5,374 V387.5" stroke="#000" fill="none"/>
<path d="M486.5,387.5 H495" stroke="#000" fill="none"/>
<text x="513" y="391" font-size="11" fill="#000">If environment error</text>
<path d="M642.5,379.5 H651.5 L655.5,383.5 V393.5 H642.5 Z" fill="url(#sdocr)" stroke="#8a4a4a" stroke-width="1"/><path d="M645.6,383.5 L652.4,391.5 M652.4,383.5 L645.6,391.5" stroke="#d0102a" stroke-width="2.6"/>
<rect x="45.5" y="493" width="122" height="20.5" fill="#fff" stroke="#8c8c8c" stroke-width="1"/>
<rect x="45" y="461" width="123" height="37" rx="3" fill="#000" opacity="0.6" filter="url(#nshadow)"/>
<rect x="45.5" y="456.5" width="122" height="37" rx="3" fill="url(#hdr)" stroke="#111" stroke-width="1"/>
<text x="83.5" y="479" font-size="12" font-weight="bold" fill="#000008" stroke="#000008" stroke-width="0.3" text-anchor="start" textLength="77.7" lengthAdjust="spacingAndGlyphs">Pay Bill Online</text>
<rect x="53" y="485.5" width="15" height="4" fill="#7a7a7a"/><rect x="48.5" y="464.5" width="24" height="21" rx="1.5" fill="url(#grayv)" stroke="#5a5a5a"/><rect x="50.5" y="466.5" width="20" height="17" fill="url(#screen)" stroke="#4a5a62" stroke-width="0.8"/><path d="M64,467 L70,467 L70,473 Z" fill="#e0f6fa" opacity="0.6"/><circle cx="60.3" cy="475" r="6.6" fill="url(#globe)" stroke="#f4fcff" stroke-width="0.9"/><path d="M55,472.5 Q57,469 61,469.2 L60.5,471.5 Q58,472.5 58.5,474.5 L62.5,476 L60.5,480.5 Q56,478 55,472.5 Z" fill="#168ab2"/><path d="M63,469.8 Q66.5,471.5 66.6,476 L64.5,473.5 Z" fill="#168ab2"/>
<path d="M51.5,493 V506.5" stroke="#000" fill="none"/>
<path d="M51.5,506.5 H60" stroke="#000" fill="none"/>
<text x="78" y="510" font-size="11" fill="#000" textLength="42.4" lengthAdjust="spacingAndGlyphs">Assert41</text>
<path d="M67,500.5 L71.3,506.3 L67,512.1 L62.7,506.3 Z" fill="#fff" stroke="url(#cyanv)" stroke-width="2.5" stroke-linejoin="miter"/>
<path d="M152.5,498.5 H161.5 L165.5,502.5 V512.5 H152.5 Z" fill="url(#sdocr)" stroke="#8a4a4a" stroke-width="1"/><path d="M155.6,502.5 L162.4,510.5 M162.4,502.5 L155.6,510.5" stroke="#d0102a" stroke-width="2.6"/>
<rect x="215.5" y="493" width="95" height="20.5" fill="#fff" stroke="#8c8c8c" stroke-width="1"/>
<rect x="205" y="461" width="106" height="37" rx="3" fill="#000" opacity="0.6" filter="url(#nshadow)"/>
<rect x="205.5" y="456.5" width="105" height="37" rx="3" fill="url(#hdr)" stroke="#111" stroke-width="1"/>
<text x="250" y="479" font-size="12" font-weight="bold" fill="#000008" stroke="#000008" stroke-width="0.3" text-anchor="start">Pay Bill</text>
<path d="M221.5,493 V506.5" stroke="#000" fill="none"/>
<path d="M221.5,506.5 H230" stroke="#000" fill="none"/>
<text x="248" y="510" font-size="11" fill="#000" textLength="42.4" lengthAdjust="spacingAndGlyphs">Assert42</text>
<path d="M237,500.5 L241.3,506.3 L237,512.1 L232.7,506.3 Z" fill="#fff" stroke="url(#cyanv)" stroke-width="2.5" stroke-linejoin="miter"/>
<path d="M295.5,498.5 H304.5 L308.5,502.5 V512.5 H295.5 Z" fill="url(#sdocr)" stroke="#8a4a4a" stroke-width="1"/><path d="M298.6,502.5 L305.4,510.5 M305.4,502.5 L298.6,510.5" stroke="#d0102a" stroke-width="2.6"/>
<rect x="358.5" y="493" width="167" height="34.5" fill="#fff" stroke="#8c8c8c" stroke-width="1"/>
<rect x="359" y="494" width="166" height="19" fill="url(#row1)"/>
<rect x="350" y="461" width="176" height="37" rx="3" fill="#000" opacity="0.6" filter="url(#nshadow)"/>
<rect x="350.5" y="456.5" width="175" height="37" rx="3" fill="url(#hdr)" stroke="#111" stroke-width="1"/>
<text x="400" y="479" font-size="12" font-weight="bold" fill="#000008" stroke="#000008" stroke-width="0.3" text-anchor="start">Node</text>
<path d="M364.5,493 V520.5" stroke="#000" fill="none"/>
<path d="M364.5,506.5 H373" stroke="#000" fill="none"/>
<text x="391" y="510" font-size="11" fill="#000" textLength="97" lengthAdjust="spacingAndGlyphs">If environment error</text>
<g transform="rotate(-25 380 507.5)"><ellipse cx="380" cy="507.5" rx="6.5" ry="4" fill="url(#beanf)" stroke="#2e2a10" stroke-width="0.9"/><path d="M375.32,507.3 Q380,505.82 384.68,507.3" fill="none" stroke="#d4cc98" stroke-width="1.44" opacity="0.75"/><path d="M375.71,507.98 Q380,506.78 384.29,507.98" fill="none" stroke="#1a1606" stroke-width="0.96"/></g>
<path d="M510.5,498.5 H519.5 L523.5,502.5 V513.5 H510.5 Z" fill="url(#sdoc)" stroke="#555" stroke-width="1"/><circle cx="517" cy="506.5" r="3.9" fill="#fff" stroke="#cc1a1a" stroke-width="2"/><path d="M514.6,509 L519.4,504" stroke="#cc1a1a" stroke-width="1.8"/>
<path d="M364.5,520.5 H373" stroke="#000" fill="none"/>
<text x="391" y="524" font-size="11" fill="#000" textLength="114.8" lengthAdjust="spacingAndGlyphs">Any Exception Then Fail</text>
<path d="M380,514.5 L384.3,520.3 L380,526.0999999999999 L375.7,520.3 Z" fill="#fff" stroke="url(#cyanv)" stroke-width="2.5" stroke-linejoin="miter"/>
<path d="M510.5,512.5 H519.5 L523.5,516.5 V526.5 H510.5 Z" fill="url(#sdocr)" stroke="#8a4a4a" stroke-width="1"/><path d="M513.6,516.5 L520.4,524.5 M520.4,516.5 L513.6,524.5" stroke="#d0102a" stroke-width="2.6"/>
<rect x="573.5" y="493" width="167" height="34.5" fill="#fff" stroke="#8c8c8c" stroke-width="1"/>
<rect x="574" y="494" width="166" height="19" fill="url(#row1)"/>
<rect x="560" y="461" width="181" height="37" rx="3" fill="#000" opacity="0.6" filter="url(#nshadow)"/>
<rect x="560.5" y="456.5" width="180" height="37" rx="3" fill="url(#hdr)" stroke="#111" stroke-width="1"/>
<text x="677" y="479" font-size="12" font-weight="bold" fill="#000008" stroke="#000008" stroke-width="0.3" text-anchor="end">Delete User</text>
<path d="M579.5,493 V520.5" stroke="#000" fill="none"/>
<path d="M579.5,506.5 H588" stroke="#000" fill="none"/>
<text x="606" y="510" font-size="11" fill="#000" textLength="97" lengthAdjust="spacingAndGlyphs">If environment error</text>
<g transform="translate(587,499) scale(0.5)"><path d="M1.5,19 L2,25 Q2.5,27 5,28.5 L9,31 Q10.5,31.8 13,31 L28,26 Q30,25.3 30,23 L29.8,18.5 Z" fill="#6e6e6e" stroke="#555" stroke-width="0.7"/><path d="M1.5,19 Q1.3,16.8 4,16.2 L20,13.5 Q23,13 26,14.8 L29,17 Q30.5,18.3 29.8,19.5 Q29.5,20.5 28,21 L13,26 Q10,27 8,25.8 Z" fill="url(#tray)" stroke="#6a6a6a" stroke-width="0.7"/><path d="M6,19 L20.5,16.5 Q23,16.2 25,17.5 L26,18.5 L12.5,22.8 Q10.5,23.3 9,22.4 Z" fill="#c8c8c8" opacity="0.8"/><path d="M22.8,1.8 L29,5.2 V12.4 L22.8,15.8 L16.6,12.4 V5.2 Z" fill="#fff"/><path d="M22.8,3.6 L27.3,6.1 V11.4 L22.8,13.9 L18.3,11.4 V6.1 Z" fill="#8a8a8a"/><path d="M22.8,3.6 L27.3,6.1 L22.8,8.6 L18.3,6.1 Z" fill="#b8b8b8"/><path d="M22.8,8.6 V13.9 L27.3,11.4 V6.1 Z" fill="#6c6c6c"/></g>
<path d="M725.5,498.5 H734.5 L738.5,502.5 V513.5 H725.5 Z" fill="url(#sdoc)" stroke="#555" stroke-width="1"/><circle cx="732" cy="506.5" r="3.9" fill="#fff" stroke="#cc1a1a" stroke-width="2"/><path d="M729.6,509 L734.4,504" stroke="#cc1a1a" stroke-width="1.8"/>
<path d="M579.5,520.5 H588" stroke="#000" fill="none"/>
<text x="606" y="524" font-size="11" fill="#000" textLength="114.8" lengthAdjust="spacingAndGlyphs">Any Exception Then Fail</text>
<path d="M595,514.5 L599.3,520.3 L595,526.0999999999999 L590.7,520.3 Z" fill="#fff" stroke="url(#cyanv)" stroke-width="2.5" stroke-linejoin="miter"/>
<path d="M725.5,512.5 H734.5 L738.5,516.5 V526.5 H725.5 Z" fill="url(#sdocr)" stroke="#8a4a4a" stroke-width="1"/><path d="M728.6,516.5 L735.4,524.5 M735.4,516.5 L728.6,524.5" stroke="#d0102a" stroke-width="2.6"/>
<rect x="45.5" y="612" width="154" height="34.5" fill="#fff" stroke="#8c8c8c" stroke-width="1"/>
<rect x="46" y="613" width="153" height="19" fill="url(#row1)"/>
<rect x="45" y="580" width="155" height="37" rx="3" fill="#000" opacity="0.6" filter="url(#nshadow)"/>
<rect x="45.5" y="575.5" width="154" height="37" rx="3" fill="url(#hdr)" stroke="#111" stroke-width="1"/>
<text x="83" y="598" font-size="12" font-weight="bold" fill="#000008" stroke="#000008" stroke-width="0.3" text-anchor="start" textLength="109" lengthAdjust="spacingAndGlyphs">Verify User Deleted</text>
<path d="M53,598.8666666666667 A10.0,2.6 0 0 1 73,598.8666666666667 V605.4 A10.0,2.6 0 0 1 53,605.4 Z" fill="url(#dbf)" stroke="#5c666a" stroke-width="0.9"/><path d="M54.2,604.8 A8.8,2.2 0 0 0 71.8,604.8" fill="none" stroke="#f4f8f8" stroke-width="0.9"/><path d="M53,589.7333333333333 A10.0,2.6 0 0 1 73,589.7333333333333 V596.2666666666667 A10.0,2.6 0 0 1 53,596.2666666666667 Z" fill="url(#dbf)" stroke="#5c666a" stroke-width="0.9"/><path d="M54.2,595.6666666666666 A8.8,2.2 0 0 0 71.8,595.6666666666666" fill="none" stroke="#f4f8f8" stroke-width="0.9"/><path d="M53,580.6 A10.0,2.6 0 0 1 73,580.6 V587.1333333333333 A10.0,2.6 0 0 1 53,587.1333333333333 Z" fill="url(#dbf)" stroke="#5c666a" stroke-width="0.9"/><path d="M54.2,586.5333333333333 A8.8,2.2 0 0 0 71.8,586.5333333333333" fill="none" stroke="#f4f8f8" stroke-width="0.9"/><ellipse cx="63.0" cy="580.6" rx="9.4" ry="2.1" fill="#cfdadc" stroke="#8a9698" stroke-width="0.5"/>
<path d="M51.5,612 V639.5" stroke="#000" fill="none"/>
<path d="M51.5,625.5 H60" stroke="#000" fill="none"/>
<text x="78" y="629" font-size="11" fill="#000" textLength="56.5" lengthAdjust="spacingAndGlyphs">If SQL error</text>
<path d="M62,628.5 A5.0,1.5 0 0 1 72,628.5 V631.5 A5.0,1.5 0 0 1 62,631.5 Z" fill="url(#dbf)" stroke="#5c666a" stroke-width="0.6"/><path d="M63.2,630.9 A3.8,1.1 0 0 0 70.8,630.9" fill="none" stroke="#f4f8f8" stroke-width="0.6"/><path d="M62,624.0 A5.0,1.5 0 0 1 72,624.0 V627.0 A5.0,1.5 0 0 1 62,627.0 Z" fill="url(#dbf)" stroke="#5c666a" stroke-width="0.6"/><path d="M63.2,626.4 A3.8,1.1 0 0 0 70.8,626.4" fill="none" stroke="#f4f8f8" stroke-width="0.6"/><path d="M62,619.5 A5.0,1.5 0 0 1 72,619.5 V622.5 A5.0,1.5 0 0 1 62,622.5 Z" fill="url(#dbf)" stroke="#5c666a" stroke-width="0.6"/><path d="M63.2,621.9 A3.8,1.1 0 0 0 70.8,621.9" fill="none" stroke="#f4f8f8" stroke-width="0.6"/><ellipse cx="67.0" cy="619.5" rx="4.4" ry="1.0" fill="#cfdadc" stroke="#8a9698" stroke-width="0.5"/>
<path d="M184.5,617.5 H193.5 L197.5,621.5 V632.5 H184.5 Z" fill="url(#sdoc)" stroke="#555" stroke-width="1"/><circle cx="191" cy="625.5" r="3.9" fill="#fff" stroke="#cc1a1a" stroke-width="2"/><path d="M188.6,628 L193.4,623" stroke="#cc1a1a" stroke-width="1.8"/>
<path d="M51.5,639.5 H60" stroke="#000" fill="none"/>
<text x="78" y="643" font-size="11" fill="#000" textLength="101" lengthAdjust="spacingAndGlyphs">Assert User not in DB</text>
<path d="M67,633.5 L71.3,639.3 L67,645.0999999999999 L62.7,639.3 Z" fill="#fff" stroke="url(#cyanv)" stroke-width="2.5" stroke-linejoin="miter"/>
<path d="M184.5,631.5 H193.5 L197.5,635.5 V645.5 H184.5 Z" fill="url(#sdocr)" stroke="#8a4a4a" stroke-width="1"/><path d="M187.6,635.5 L194.4,643.5 M194.4,635.5 L187.6,643.5" stroke="#d0102a" stroke-width="2.6"/>
<path d="M216.5,103.5 Q216.5,101.5 218.5,101.5 H234 L240.5,108.5 V128.5 Q240.5,130.5 238.5,130.5 H218.5 Q216.5,130.5 216.5,128.5 Z" fill="url(#docf)" stroke="#7e7e7e" stroke-width="1"/><path d="M234,102 V109 H240 Z" fill="#f8f8f8" stroke="#c8c8c8" stroke-width="0.6"/><path d="M221.8,119.5 A6.8,6.8 0 0 0 235,119.5" fill="none" stroke="#606060" stroke-width="0.7" opacity="0.45"/><circle cx="228.4" cy="116.6" r="7.2" fill="#fff" opacity="0.95"/><circle cx="228.2" cy="116.6" r="4.3" fill="none" stroke="#2a9a2a" stroke-width="3.6"/>
<path d="M228.5,579.5 Q228.5,577.5 230.5,577.5 H247 L253.5,584.5 V606.5 Q253.5,608.5 251.5,608.5 H230.5 Q228.5,608.5 228.5,606.5 Z" fill="url(#docf)" stroke="#7e7e7e" stroke-width="1"/><path d="M247,578 V585 H253 Z" fill="#f8f8f8" stroke="#c8c8c8" stroke-width="0.6"/><path d="M230,590.5 L234.5,589 L237.5,594.5 L248.5,584 L253,586.5 L239,602.5 L233.5,602 Z" fill="url(#checkg)" stroke="#158a15" stroke-width="0.8"/><path d="M231.5,591 L234,590.2 L237.2,596 L248.5,585.3" fill="none" stroke="#a8f080" stroke-width="1" opacity="0.8"/>
<path d="M22,84 H57.5 L53,76 L73,92 L53,108 L57.5,100 H22 Z" fill="url(#garrow)"/>
<rect x="142.5" y="82.5" width="41" height="18" rx="5" ry="9" fill="url(#qcyl)" stroke="#4e5e64" stroke-width="0.9"/>
<ellipse cx="147" cy="91.5" rx="4.2" ry="8.3" fill="#a4b4ba" stroke="#5a6a70" stroke-width="0.8"/>
<path d="M152.5,83.5 Q157.0,91.5 152.5,99.5" fill="none" stroke="#e8f0f2" stroke-width="1"/>
<path d="M153.8,83.5 Q158.3,91.5 153.8,99.5" fill="none" stroke="#55656b" stroke-width="0.8"/>
<path d="M162.7,83.5 Q167.2,91.5 162.7,99.5" fill="none" stroke="#e8f0f2" stroke-width="1"/>
<path d="M164.0,83.5 Q168.5,91.5 164.0,99.5" fill="none" stroke="#55656b" stroke-width="0.8"/>
<path d="M172.89999999999998,83.5 Q177.39999999999998,91.5 172.89999999999998,99.5" fill="none" stroke="#e8f0f2" stroke-width="1"/>
<path d="M174.2,83.5 Q178.7,91.5 174.2,99.5" fill="none" stroke="#55656b" stroke-width="0.8"/>
<rect x="148" y="97" width="40" height="31" rx="3" fill="#000" opacity="0.45" filter="url(#nshadow)"/>
<path d="M148,125 H188 L193,142 H143 Z" fill="url(#labsh)" filter="url(#blur1)"/>
<rect x="148.5" y="92.5" width="39" height="34" rx="3" fill="#fff" stroke="#111"/>
<text x="150.5" y="105.5" font-size="11.2" fill="#000028" textLength="32.5" lengthAdjust="spacingAndGlyphs">user-id</text>
<text x="150.5" y="119.5" font-size="11.2" fill="#000028" textLength="21.5" lengthAdjust="spacingAndGlyphs">User</text>
<rect x="63.5" y="283.5" width="112" height="18" rx="5" ry="9" fill="url(#qcyl)" stroke="#4e5e64" stroke-width="0.9"/>
<ellipse cx="68" cy="292.5" rx="4.2" ry="8.3" fill="#a4b4ba" stroke="#5a6a70" stroke-width="0.8"/>
<path d="M73.5,284.5 Q78.0,292.5 73.5,300.5" fill="none" stroke="#e8f0f2" stroke-width="1"/>
<path d="M74.8,284.5 Q79.3,292.5 74.8,300.5" fill="none" stroke="#55656b" stroke-width="0.8"/>
<path d="M83.7,284.5 Q88.2,292.5 83.7,300.5" fill="none" stroke="#e8f0f2" stroke-width="1"/>
<path d="M85.0,284.5 Q89.5,292.5 85.0,300.5" fill="none" stroke="#55656b" stroke-width="0.8"/>
<path d="M93.9,284.5 Q98.4,292.5 93.9,300.5" fill="none" stroke="#e8f0f2" stroke-width="1"/>
<path d="M95.2,284.5 Q99.7,292.5 95.2,300.5" fill="none" stroke="#55656b" stroke-width="0.8"/>
<path d="M104.10000000000001,284.5 Q108.60000000000001,292.5 104.10000000000001,300.5" fill="none" stroke="#e8f0f2" stroke-width="1"/>
<path d="M105.4,284.5 Q109.9,292.5 105.4,300.5" fill="none" stroke="#55656b" stroke-width="0.8"/>
<path d="M114.30000000000001,284.5 Q118.80000000000001,292.5 114.30000000000001,300.5" fill="none" stroke="#e8f0f2" stroke-width="1"/>
<path d="M115.60000000000001,284.5 Q120.10000000000001,292.5 115.60000000000001,300.5" fill="none" stroke="#55656b" stroke-width="0.8"/>
<path d="M124.50000000000001,284.5 Q129.0,292.5 124.50000000000001,300.5" fill="none" stroke="#e8f0f2" stroke-width="1"/>
<path d="M125.80000000000001,284.5 Q130.3,292.5 125.80000000000001,300.5" fill="none" stroke="#55656b" stroke-width="0.8"/>
<path d="M134.70000000000002,284.5 Q139.20000000000002,292.5 134.70000000000002,300.5" fill="none" stroke="#e8f0f2" stroke-width="1"/>
<path d="M136.00000000000003,284.5 Q140.50000000000003,292.5 136.00000000000003,300.5" fill="none" stroke="#55656b" stroke-width="0.8"/>
<path d="M144.9,284.5 Q149.4,292.5 144.9,300.5" fill="none" stroke="#e8f0f2" stroke-width="1"/>
<path d="M146.20000000000002,284.5 Q150.70000000000002,292.5 146.20000000000002,300.5" fill="none" stroke="#55656b" stroke-width="0.8"/>
<path d="M155.1,284.5 Q159.6,292.5 155.1,300.5" fill="none" stroke="#e8f0f2" stroke-width="1"/>
<path d="M156.4,284.5 Q160.9,292.5 156.4,300.5" fill="none" stroke="#55656b" stroke-width="0.8"/>
<path d="M165.29999999999998,284.5 Q169.79999999999998,292.5 165.29999999999998,300.5" fill="none" stroke="#e8f0f2" stroke-width="1"/>
<path d="M166.6,284.5 Q171.1,292.5 166.6,300.5" fill="none" stroke="#55656b" stroke-width="0.8"/>
<rect x="69" y="299" width="109" height="15" rx="3" fill="#000" opacity="0.45" filter="url(#nshadow)"/>
<path d="M69,311 H178 L183,328 H64 Z" fill="url(#labsh)" filter="url(#blur1)"/>
<rect x="69.5" y="294.5" width="108" height="18" rx="3" fill="#fff" stroke="#111"/>
<text x="71.5" y="307.5" font-size="11.2" fill="#000028" textLength="102.5" lengthAdjust="spacingAndGlyphs">lisa.jms.correlation.id</text>
<rect x="0" y="3" width="6" height="668" fill="url(#dots)"/>
<rect x="6" y="3" width="2" height="668" fill="#fafafa"/>

<linearGradient id="dlgtitle" x1="0" y1="0" x2="0" y2="1">
  <stop offset="0" stop-color="#96b4d6"/><stop offset="1" stop-color="#bcd4ec"/>
</linearGradient>
<linearGradient id="combo" x1="0" y1="0" x2="0" y2="1">
  <stop offset="0" stop-color="#f6f6f6"/><stop offset="0.47" stop-color="#ececec"/><stop offset="0.5" stop-color="#dddddd"/><stop offset="1" stop-color="#d2d2d2"/>
</linearGradient>
<linearGradient id="btn" x1="0" y1="0" x2="0" y2="1">
  <stop offset="0" stop-color="#f4f4f4"/><stop offset="0.5" stop-color="#ebebeb"/><stop offset="0.55" stop-color="#dedede"/><stop offset="1" stop-color="#d6d6d6"/>
</linearGradient>
<linearGradient id="closebtn" x1="0" y1="0" x2="0" y2="1">
  <stop offset="0" stop-color="#ecb4a8"/><stop offset="0.45" stop-color="#dc8e7e"/><stop offset="0.5" stop-color="#c44e30"/><stop offset="1" stop-color="#d06a50"/>
</linearGradient>
<path d="M189,507 V211 Q189,207 193,207 H614 Q619,207 619,212 V507 Z" fill="#000"/>
<path d="M190,506 V212 Q190,208 194,208 H613 Q618,208 618,213 V506 Z" fill="#ffffff"/>
<path d="M191,506 V212 Q191,209 194,209 H613 Q618,209 618,213 V506 Z" fill="#22d6f0"/>
<path d="M191,505 V212 Q191,209 194,209 H613 Q617,209 617,213 V505 Z" fill="#bad2ea"/>
<rect x="191" y="209" width="426" height="28" fill="url(#dlgtitle)"/>
<rect x="199" y="239" width="410" height="258" fill="#efefef"/>
<rect x="198.5" y="238.5" width="412" height="260" fill="none" stroke="#ffffff"/>
<rect x="197.5" y="237.5" width="412" height="260" fill="none" stroke="#a0a0a0"/>
<rect x="199.5" y="217.5" width="15" height="15" rx="1.5" fill="#f0f0f0" stroke="#6a6a6a"/><ellipse cx="207" cy="225" rx="5.8" ry="5.6" transform="rotate(-20 207 225)" fill="#5a8ab0"/><path d="M202,227 Q203,221 207,220 L207,230 Q203,230 202,227 Z" fill="#8cc0d8" opacity="0.8"/><path d="M207.23,223.72 L207.80,220.47" stroke="#e8f0f4" stroke-width="1.1"/><path d="M208.22,224.56 L211.32,223.43" stroke="#e8f0f4" stroke-width="1.1"/><path d="M208.00,225.84 L210.52,227.96" stroke="#e8f0f4" stroke-width="1.1"/><path d="M206.77,226.28 L206.20,229.53" stroke="#e8f0f4" stroke-width="1.1"/><path d="M205.78,225.44 L202.68,226.57" stroke="#e8f0f4" stroke-width="1.1"/><path d="M206.00,224.16 L203.48,222.04" stroke="#e8f0f4" stroke-width="1.1"/>
<text x="219.3" y="230" font-size="11.6" fill="#000" textLength="96" lengthAdjust="spacingAndGlyphs">Stage a Quick Test</text>
<rect x="578.5" y="217.5" width="30" height="16" rx="2.2" fill="url(#closebtn)" stroke="#4a1c22"/>
<rect x="579.5" y="218.5" width="28" height="14" rx="1.5" fill="none" stroke="#f4c8c0" stroke-opacity="0.5"/>
<path d="M590,222.8 L597.5,228.6 M597.5,222.8 L590,228.6" stroke="#5a5a6a" stroke-width="4.4" stroke-linecap="round"/>
<path d="M590,222.8 L597.5,228.6 M597.5,222.8 L590,228.6" stroke="#fafafa" stroke-width="2.6" stroke-linecap="round"/>
<!-- group box -->
<rect x="206.5" y="250.5" width="394" height="195" fill="none" stroke="#a0a0a0"/>
<rect x="207.5" y="251.5" width="392" height="193" fill="none" stroke="#ffffff" opacity="0.7"/>
<rect x="211" y="244" width="143" height="14" fill="#efefef"/>
<text x="212.4" y="255" font-size="11" fill="#000" textLength="139" lengthAdjust="spacingAndGlyphs">Stage Quick Test Parameters</text>
<!-- labels -->
<text x="279.5" y="284" font-size="11.8" font-weight="bold" fill="#6e737a" textLength="59.8" lengthAdjust="spacingAndGlyphs">Run Name:</text>
<text x="219.2" y="314" font-size="11.8" font-weight="bold" fill="#6e737a" textLength="120" lengthAdjust="spacingAndGlyphs">Number of Instances:</text>
<text x="227.5" y="344" font-size="11.8" font-weight="bold" fill="#6e737a" textLength="111.8" lengthAdjust="spacingAndGlyphs">Stage Instances To:</text>
<rect x="343.5" y="270.5" width="245" height="19" fill="#fff" stroke="#a6a6a6"/>
<text x="345.7" y="284" font-size="11.3" fill="#000" textLength="72" lengthAdjust="spacingAndGlyphs">QuickStageRun</text>
<rect x="419" y="273" width="1" height="14" fill="#000"/>
<rect x="343.5" y="300.5" width="245" height="19" fill="#fff" stroke="#a6a6a6"/>
<text x="346" y="314" font-size="11.5" fill="#000">1</text>
<rect x="343.5" y="330.5" width="245" height="19" rx="1" fill="url(#combo)" stroke="#a6a6a6"/>
<rect x="344.5" y="331.5" width="243" height="17" rx="1.5" fill="none" stroke="#ffffff" stroke-opacity="0.8"/>
<text x="346.8" y="344" font-size="11.3" fill="#000" textLength="172.3" lengthAdjust="spacingAndGlyphs">Stage Local (no Coordinator Server)</text>
<path d="M575.6,339.8 H583.4 L579.5,344.5 Z" fill="#000"/>
<rect x="347.5" y="365.5" width="12" height="12" fill="#ffffff" stroke="#858585"/>
<rect x="349" y="367" width="9" height="9" fill="#d6dce6"/>
<path d="M350.2,371.6 L353,375 L357.2,367.6" stroke="#3d56a2" stroke-width="1.9" fill="none" stroke-linecap="round"/>
<text x="363.8" y="375" font-size="11.5" fill="#000" textLength="107.2" lengthAdjust="spacingAndGlyphs">If test ends, restart it.</text>
<rect x="346.5" y="465.5" width="44" height="20" rx="3" fill="url(#btn)" stroke="#707070"/>
<text x="360.4" y="479" font-size="11.5" fill="#000" textLength="14.3" lengthAdjust="spacingAndGlyphs">OK</text>
<rect x="398.5" y="465.5" width="62" height="20" rx="3" fill="url(#btn)" stroke="#707070"/>
<text x="412.2" y="479" font-size="11.5" fill="#000" textLength="32.2" lengthAdjust="spacingAndGlyphs">Cancel</text>

</svg>
</body></html>
